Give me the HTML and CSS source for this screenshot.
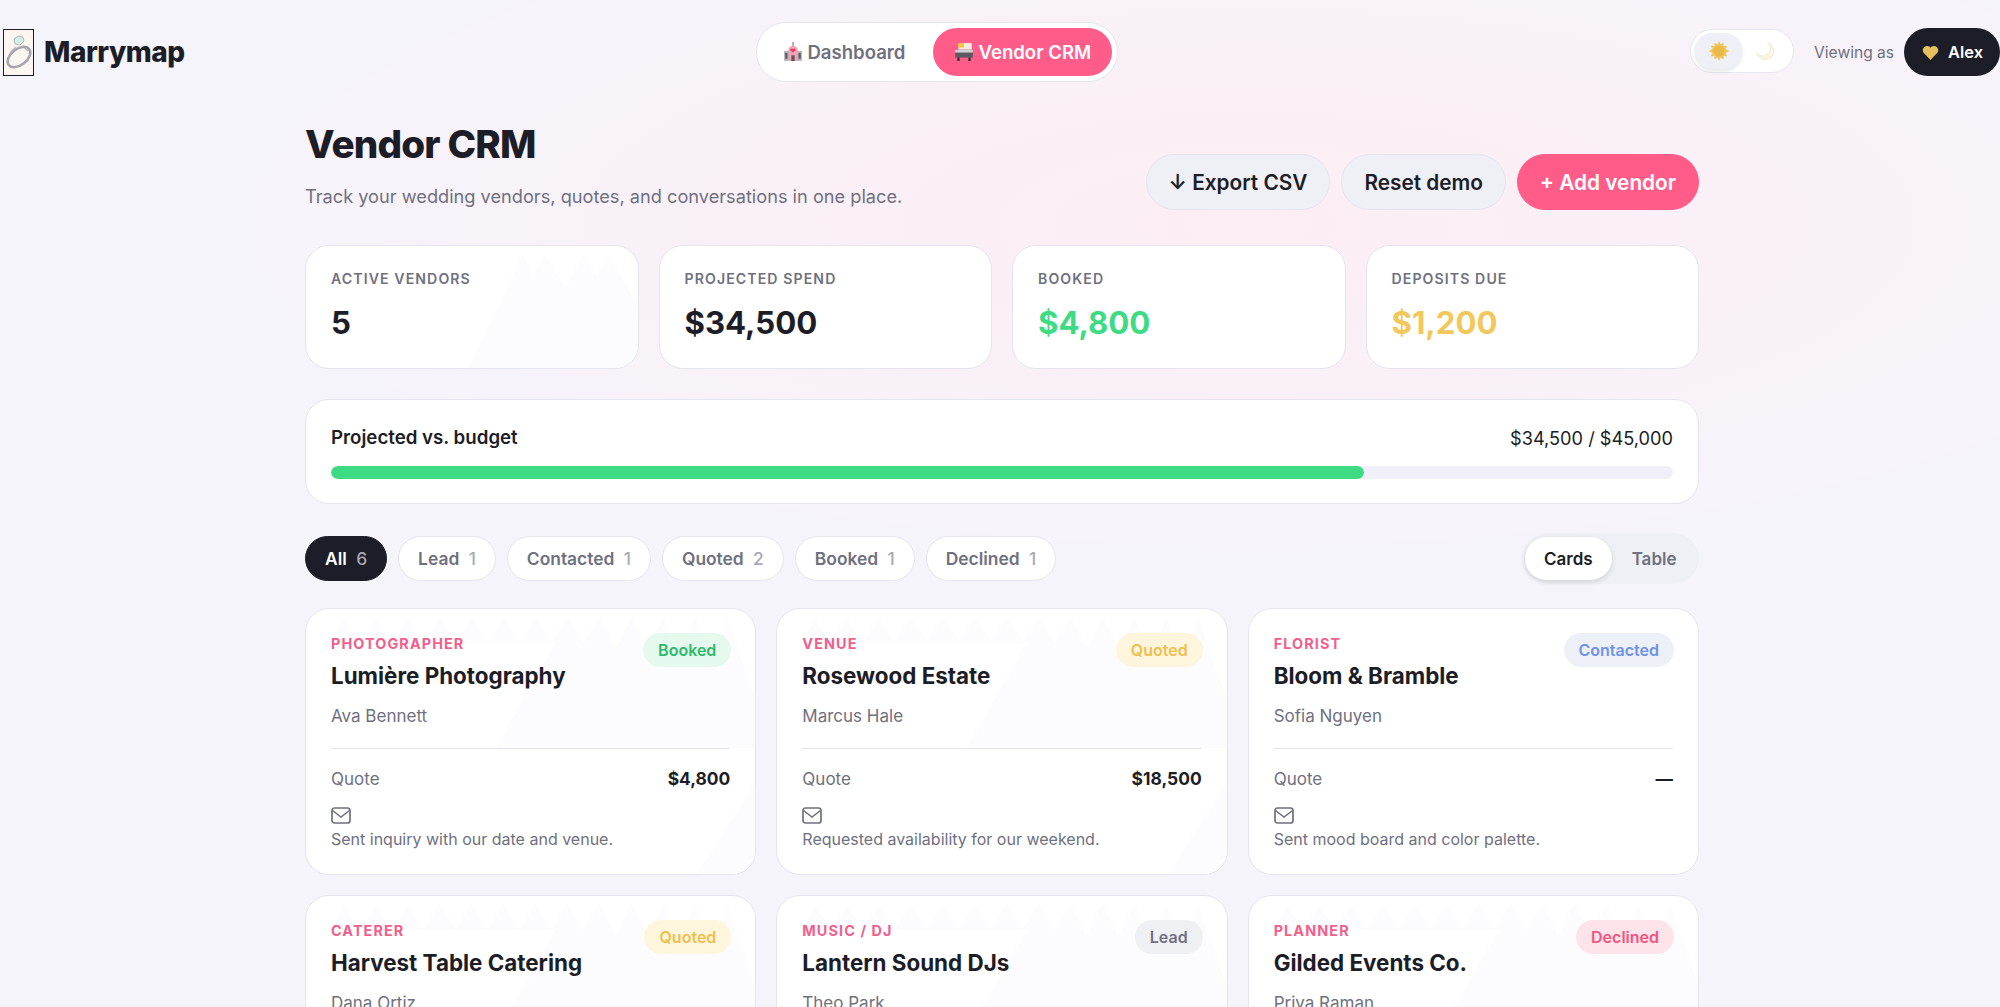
FILE: index.html
```html
<!DOCTYPE html>
<html lang="en">
<head>
<meta charset="utf-8">
<title>Marrymap - Vendor CRM</title>
<link rel="stylesheet" href="styles.css">
</head>
<body>

<svg class="defs" width="0" height="0" aria-hidden="true">
  <defs>
    <symbol id="peaks" viewBox="0 0 450 267" preserveAspectRatio="none">
      <path d="M25 34L38 10L54 34L70 10L86 34L102 10L118 34L134 8L150 34L166 8L182 34L198 8L214 34L230 8L246 34L262 8L278 34L294 8L310 40L326 8L342 40L358 8L374 50L390 8L406 60L422 10L450 90V267H392L450 175V140H190L250 34Z" fill="#fcfcfe"/>
    </symbol>
    <symbol id="peaks-stat" viewBox="0 0 333 123" preserveAspectRatio="none">
      <path d="M163 123L218 8L228 30L240 8L260 42L280 8L292 30L304 8L316 30L333 60V123Z" fill="#fcfcfe"/>
    </symbol>
    <symbol id="mail" viewBox="0 0 20 17">
      <rect x="1" y="1" width="18" height="15" rx="2.500" fill="none" stroke="currentColor" stroke-width="1.700"/>
      <path d="M1.500 3.500L10 10L18.500 3.500" fill="none" stroke="currentColor" stroke-width="1.500"/>
    </symbol>
  </defs>
</svg>

<header class="topbar">
  <div class="brand">
    <span class="brand-logo">
      <svg viewBox="0 0 29 45" width="29" height="45">
        <path d="M10 9l4-3 5 1 1 4-4 4-5-1z" fill="#d3ece6" stroke="#a4adab" stroke-width=".8"/>
        <path d="M12 17l-6 6M19 16l5 5" stroke="#b9babd" stroke-width="1.500" fill="none"/>
        <ellipse cx="15" cy="27" rx="13" ry="8" transform="rotate(-38 15 27)" fill="none" stroke="#a6a7ac" stroke-width="2.500"/>
      </svg>
    </span>
    <span class="brand-name">Marrymap</span>
  </div>

  <nav class="mainnav">
    <a class="navlink" href="#">
      <svg class="emoji" viewBox="0 0 18 18">
        <path d="M1 8h16v9H1z" fill="#b4b1b8"/>
        <path d="M5 17V5.500l4-3 4 3V17z" fill="#f3a3b5"/>
        <path d="M9 0v3" stroke="#8a6a6a"/>
        <path d="M9 9.500L6.500 7.500a1.400 1.400 0 0 1 2.500-1 1.400 1.400 0 0 1 2.500 1z" fill="#e63d63"/>
        <path d="M7.500 12h3v5h-3zM2 10h2v5H2zM14 10h2v5h-2z" fill="#5e5a62"/>
      </svg>
      Dashboard
    </a>
    <a class="navlink navlink-on" href="#">
      <svg class="emoji" viewBox="0 0 18 18">
        <path d="M4 1h12v6H4z" fill="#f4efe2"/>
        <path d="M4 1h5v4H4z" fill="#f0c63c"/>
        <path d="M1 7h16v7H1z" fill="#5a5a60"/>
        <path d="M1 7h16v2.500H1z" fill="#d2d2d6"/>
        <path d="M3 14h2v3H3zM13 14h2v3h-2z" fill="#2c2c30"/>
      </svg>
      Vendor CRM
    </a>
  </nav>

  <div class="account">
    <div class="theme-toggle">
      <span class="theme-opt theme-opt-on">
        <svg viewBox="0 0 20 20" width="20" height="20">
          <path d="M10 0l1.600 3.500L14.500 1.500l.2 3.600 3.600-.4-1.700 3.100L20 10l-3.400 2.200 1.700 3.100-3.600-.4-.2 3.600-2.900-2-1.600 3.500-1.600-3.500-2.900 2-.2-3.600-3.600.4 1.700-3.100L0 10l3.400-2.200-1.700-3.100 3.600.4.2-3.600 2.900 2z" fill="#f0c55f"/>
          <circle cx="10" cy="10" r="5.500" fill="#e9b949"/>
        </svg>
      </span>
      <span class="theme-opt">
        <svg viewBox="0 0 20 20" width="19" height="19">
          <path d="M13 1a9 9 0 1 1-12 11a8 8 0 0 0 12-11z" fill="#fbf6e3" stroke="#e9dfba" stroke-width=".6"/>
        </svg>
      </span>
    </div>
    <span class="viewing">Viewing as</span>
    <button class="who">
      <svg viewBox="0 0 18 16" width="17" height="15"><path d="M9 16L1.500 8A4.500 4.500 0 0 1 9 3a4.500 4.500 0 0 1 7.500 5z" fill="#e8bf5e"/></svg>
      Alex
    </button>
  </div>
</header>

<main class="page">
  <div class="page-head">
    <div>
      <h1 class="page-title">Vendor CRM</h1>
      <p class="page-sub">Track your wedding vendors, quotes, and conversations in one place.</p>
    </div>
    <div class="actions">
      <button class="btn">↓ Export CSV</button>
      <button class="btn">Reset demo</button>
      <button class="btn btn-pink">+ Add vendor</button>
    </div>
  </div>

  <section class="stats">
    <div class="panel stat">
      <svg class="peaks"><use href="#peaks-stat"/></svg>
      <div class="stat-label">ACTIVE VENDORS</div>
      <div class="stat-value">5</div>
    </div>
    <div class="panel stat">
      <div class="stat-label">PROJECTED SPEND</div>
      <div class="stat-value">$34,500</div>
    </div>
    <div class="panel stat">
      <div class="stat-label">BOOKED</div>
      <div class="stat-value green">$4,800</div>
    </div>
    <div class="panel stat">
      <div class="stat-label">DEPOSITS DUE</div>
      <div class="stat-value gold">$1,200</div>
    </div>
  </section>

  <section class="panel budget">
    <div class="budget-row">
      <span class="budget-title">Projected vs. budget</span>
      <span class="budget-nums">$34,500 / $45,000</span>
    </div>
    <div class="track"><div class="track-fill" style="width:77%"></div></div>
  </section>

  <div class="toolbar">
    <div class="filters">
      <button class="chip chip-on">All <b>6</b></button>
      <button class="chip">Lead <b>1</b></button>
      <button class="chip">Contacted <b>1</b></button>
      <button class="chip">Quoted <b>2</b></button>
      <button class="chip">Booked <b>1</b></button>
      <button class="chip">Declined <b>1</b></button>
    </div>
    <div class="viewswitch">
      <button class="view view-on">Cards</button>
      <button class="view">Table</button>
    </div>
  </div>

  <section class="grid">
    <article class="panel card">
      <svg class="peaks"><use href="#peaks"/></svg>
      <span class="tag tag-booked">Booked</span>
      <div class="kind">PHOTOGRAPHER</div>
      <h3 class="card-name">Lumière Photography</h3>
      <div class="contact">Ava Bennett</div>
      <div class="quote-row"><span>Quote</span><strong>$4,800</strong></div>
      <svg class="mail"><use href="#mail"/></svg>
      <div class="note">Sent inquiry with our date and venue.</div>
    </article>
    <article class="panel card">
      <svg class="peaks"><use href="#peaks"/></svg>
      <span class="tag tag-quoted">Quoted</span>
      <div class="kind">VENUE</div>
      <h3 class="card-name">Rosewood Estate</h3>
      <div class="contact">Marcus Hale</div>
      <div class="quote-row"><span>Quote</span><strong>$18,500</strong></div>
      <svg class="mail"><use href="#mail"/></svg>
      <div class="note">Requested availability for our weekend.</div>
    </article>
    <article class="panel card">
      <span class="tag tag-contacted">Contacted</span>
      <div class="kind">FLORIST</div>
      <h3 class="card-name">Bloom &amp; Bramble</h3>
      <div class="contact">Sofia Nguyen</div>
      <div class="quote-row"><span>Quote</span><strong>—</strong></div>
      <svg class="mail"><use href="#mail"/></svg>
      <div class="note">Sent mood board and color palette.</div>
    </article>
    <article class="panel card">
      <svg class="peaks"><use href="#peaks"/></svg>
      <span class="tag tag-quoted">Quoted</span>
      <div class="kind">CATERER</div>
      <h3 class="card-name">Harvest Table Catering</h3>
      <div class="contact">Dana Ortiz</div>
    </article>
    <article class="panel card">
      <svg class="peaks"><use href="#peaks"/></svg>
      <span class="tag tag-lead">Lead</span>
      <div class="kind">MUSIC / DJ</div>
      <h3 class="card-name">Lantern Sound DJs</h3>
      <div class="contact">Theo Park</div>
    </article>
    <article class="panel card">
      <svg class="peaks"><use href="#peaks"/></svg>
      <span class="tag tag-declined">Declined</span>
      <div class="kind">PLANNER</div>
      <h3 class="card-name">Gilded Events Co.</h3>
      <div class="contact">Priya Raman</div>
    </article>
  </section>
</main>

</body>
</html>
```

FILE: styles.css
```css
* {
	box-sizing: border-box;
}
html, body {
	margin: 0;
	height: 1007px;
	overflow: hidden;
}
body {
	font-family: Inter, "Liberation Sans", sans-serif;
	color: #1c1d26;
	background:
		radial-gradient(ellipse 1050px 340px at 1250px 225px, #fdedf4 0%, rgba(253,237,244,0) 100%),
		#f6f4fb;
}
button {
	font-family: inherit;
	border: none;
	cursor: pointer;
}
.defs {
	display: block;
	height: 0;
}

/* top bar */
.topbar {
	display: flex;
	justify-content: space-between;
	align-items: center;
	height: 104px;
	padding: 0 0 0 3px;
}
.brand {
	display: flex;
	align-items: center;
	gap: 10px;
}
.brand-logo {
	display: block;
	width: 31px;
	height: 47px;
	border: 1px solid #1c1d26;
	background: #fdf5f0;
}
.brand-logo svg {
	display: block;
}
.brand-name {
	font-size: 28px;
	font-weight: 800;
	letter-spacing: -0.5px;
}
.mainnav {
	display: flex;
	gap: 7px;
	padding: 5px;
	height: 60px;
	background: #fff;
	border: 1px solid #e6e5ef;
	border-radius: 30px;
}
.navlink {
	display: flex;
	align-items: center;
	gap: 4px;
	height: 48px;
	padding: 0 21px;
	border-radius: 24px;
	font-size: 18.6px;
	font-weight: 600;
	color: #6f7080;
	text-decoration: none;
}
.navlink-on {
	color: #fff;
	background: #ff5c8a;
}
.emoji {
	width: 20px;
	height: 20px;
}
.account {
	display: flex;
	align-items: center;
	justify-content: flex-end;
	gap: 20px;
}
.theme-toggle {
	display: flex;
	width: 104px;
	height: 44px;
	margin-top: -2px;
	padding: 3px 4px;
	background: #fff;
	border: 1px solid #e8e7f0;
	border-radius: 22px;
}
.theme-opt {
	display: flex;
	align-items: center;
	justify-content: center;
	width: 47px;
	height: 36px;
	border-radius: 18px;
}
.theme-opt-on {
	background: #eff0f6;
	box-shadow: 0 2px 4px rgba(28,29,38,.12);
}
.viewing {
	font-size: 15.6px;
	color: #6f7080;
	margin-right: -10px;
}
.who {
	display: flex;
	align-items: center;
	gap: 9px;
	height: 48px;
	padding: 0 17px 0 18px;
	border-radius: 24px;
	background: #1c1d26;
	color: #fff;
	font-size: 16.4px;
	font-weight: 600;
}

/* page */
.page {
	width: 1394px;
	margin-left: 305px;
}
.page-head {
	display: flex;
	justify-content: space-between;
	align-items: flex-end;
	margin-bottom: 36px;
}
.page-title {
	margin: 17px 0 0;
	font-size: 38.6px;
	font-weight: 800;
	letter-spacing: -0.8px;
	line-height: 46px;
}
.page-sub {
	margin: 16px 0 0;
	font-size: 18.2px;
	line-height: 26px;
	color: #6f7080;
}
.actions {
	display: flex;
	gap: 11px;
	margin-bottom: -1px;
}
.btn {
	height: 56px;
	padding: 0 22px;
	border-radius: 28px;
	background: #eff0f6;
	border: 1px solid #e6e5ef;
	color: #1c1d26;
	font-size: 20.8px;
	font-weight: 600;
}
.btn-pink {
	background: #ff5c8a;
	border-color: #ff5c8a;
	color: #fff;
}
.panel {
	position: relative;
	overflow: hidden;
	background: #fff;
	border: 1px solid #e6e5ef;
	border-radius: 24px;
}
.peaks {
	position: absolute;
	left: 0;
	top: 0;
	width: 100%;
	height: 100%;
}
.stats {
	display: grid;
	grid-template-columns: repeat(4, 1fr);
	gap: 20px;
}
.stat {
	height: 124px;
	padding: 24px 25px;
}
.stat-label, .stat-value {
	position: relative;
}
.stat-label {
	font-size: 14.1px;
	font-weight: 600;
	letter-spacing: 1.1px;
	color: #6f7080;
}
.stat-value {
	margin-top: 16px;
	font-size: 31.2px;
	font-weight: 700;
	line-height: 40px;
}
.green {
	color: #3ddc84;
}
.gold {
	color: #f2c85b;
}
.budget {
	height: 105px;
	margin-top: 30px;
	padding: 25px;
}
.budget-row {
	display: flex;
	justify-content: space-between;
	font-size: 18.2px;
	line-height: 26px;
}
.budget-title {
	font-size: 18.7px;
	font-weight: 600;
}
.track {
	margin-top: 15px;
	height: 13px;
	border-radius: 7px;
	background: #f1f0f8;
	overflow: hidden;
}
.track-fill {
	height: 100%;
	background: #3ddc84;
	border-radius: 7px;
}

/* filters */
.toolbar {
	display: flex;
	justify-content: space-between;
	align-items: center;
	margin-top: 29px;
	margin-bottom: 24px;
}
.filters {
	display: flex;
	gap: 11px;
}
.chip {
	height: 45px;
	padding: 0 19px;
	border-radius: 23px;
	background: #fff;
	border: 1px solid #e6e5ef;
	color: #6f7080;
	font-size: 17.4px;
	font-weight: 600;
}
.chip b {
	font-weight: 500;
	margin-left: 5px;
	color: #a9aab5;
}
.chip-on {
	background: #1c1d26;
	border-color: #1c1d26;
	color: #fff;
}
.viewswitch {
	display: flex;
	height: 51px;
	padding: 4px 3px;
	background: #eff0f6;
	border-radius: 26px;
}
.view {
	height: 43px;
	padding: 0 19.5px;
	border-radius: 22px;
	background: none;
	color: #6f7080;
	font-size: 17px;
	font-weight: 600;
}
.view-on {
	background: #fff;
	color: #1c1d26;
	box-shadow: 0 2px 5px rgba(28,29,38,.14);
}

/* vendor cards */
.grid {
	display: grid;
	grid-template-columns: repeat(3, 1fr);
	gap: 20px;
}
.card {
	height: 267px;
	padding: 26px 25px;
}
.card > *:not(.peaks):not(.tag) {
	position: relative;
}
.tag {
	position: absolute;
	top: 24px;
	right: 24px;
	height: 34px;
	padding: 0 15px;
	border-radius: 17px;
	font-size: 16px;
	font-weight: 600;
	line-height: 34px;
}
.tag-booked {
	background: #e6f9ee;
	color: #2fb96d;
}
.tag-quoted {
	background: #fef6dc;
	color: #eebf4f;
}
.tag-contacted {
	background: #eef0f8;
	color: #6f93e6;
}
.tag-lead {
	background: #eff0f4;
	color: #6f7080;
}
.tag-declined {
	background: #ffe3ea;
	color: #f0557f;
}
.kind {
	font-size: 14.4px;
	font-weight: 700;
	letter-spacing: 1.1px;
	line-height: 17px;
	color: #f0608d;
}
.card-name {
	margin: 9px 0 0;
	font-size: 22.4px;
	font-weight: 700;
	line-height: 30px;
}
.contact {
	margin-top: 13px;
	padding-bottom: 20px;
	border-bottom: 1px solid #e6e5ef;
	font-size: 17px;
	line-height: 24px;
	color: #6f7080;
}
.quote-row {
	display: flex;
	justify-content: space-between;
	margin-top: 18px;
	font-size: 17px;
	line-height: 24px;
	color: #6f7080;
}
.quote-row strong {
	font-size: 17.4px;
	color: #1c1d26;
	font-weight: 700;
}
.mail {
	display: block;
	width: 20px;
	height: 17px;
	margin-top: 16px;
	color: #6f7080;
}
.note {
	margin-top: 4px;
	font-size: 16px;
	line-height: 22px;
	color: #6f7080;
}
```
